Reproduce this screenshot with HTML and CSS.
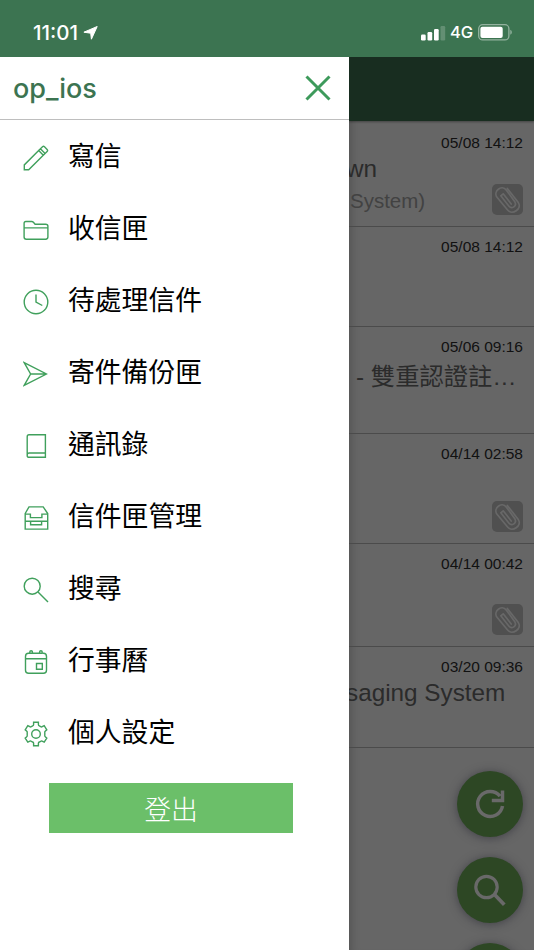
FILE: index.html
```html
<!DOCTYPE html>
<html lang="zh-Hant">
<head>
  <meta charset="UTF-8">
  <meta name="viewport" content="width=device-width, initial-scale=1.0">
  <title>op_ios</title>
  <link rel="stylesheet" href="styles.css">
</head>
<body>

  <header class="status-bar">
    <div class="status-left">
      <span class="clock">11:01</span>
      <svg class="location" width="15" height="14" viewBox="0 0 15 14"><path d="M14.2.5 8.4 13.2 7.7 7.2.9 6.2z" fill="#fff" stroke="#fff" stroke-width="1" stroke-linejoin="round"/></svg>
    </div>
    <div class="status-right">
      <svg width="25" height="16" viewBox="0 0 25 16" fill="#fff">
        <rect x="0" y="9.5" width="4.7" height="6" rx="1.2"/>
        <rect x="6.5" y="7" width="4.7" height="8.5" rx="1.2"/>
        <rect x="13" y="4" width="4.7" height="11.5" rx="1.2"/>
        <rect x="19.5" y="1" width="4.7" height="14.5" rx="1.2" opacity=".2"/>
      </svg>
      <span class="network">4G</span>
      <svg width="34" height="17" viewBox="0 0 34 17">
        <rect x=".7" y=".7" width="30.2" height="15.2" rx="4" fill="none" stroke="#fff" stroke-opacity=".45" stroke-width="1.3"/>
        <rect x="2.4" y="2.7" width="22.3" height="11.2" rx="2" fill="#fff"/>
        <path d="M32.3 5.8c2 .8 2 4.2 0 5z" fill="#fff" fill-opacity=".45"/>
      </svg>
    </div>
  </header>

  <div class="screen">
    <nav class="drawer">
      <div class="drawer-header">
        <span class="account">op_ios</span>
        <svg class="close" width="26" height="26" viewBox="0 0 26 26"><path d="M1.5 1.5l23 23M24.5 1.5l-23 23"/></svg>
      </div>

      <ul class="menu">
        <li>
          <svg class="icon" viewBox="0 0 26 26"><path d="M1.3 24.8v-4.9L15.7 5.5l4.6 4.7L5.7 24.8zM15.7 5.5 19.5 1.8q1-.9 2 0l2.6 2.6q1 1 0 2l-3.8 3.8M17.4 3.8l4.7 4.7"/></svg>
          <span>寫信</span>
        </li>
        <li>
          <svg class="icon" viewBox="0 0 26 26"><path d="M1.1 10.6V6.3q0-1.8 1.8-1.8h5.8q1 0 1.7.8l1.7 1.9h10.5q2.3 0 2.3 2.1v10.8q0 2.1-2.2 2.1H3.2q-2.1 0-2.1-2.1V10.9h23.8"/></svg>
          <span>收信匣</span>
        </li>
        <li>
          <svg class="icon" viewBox="0 0 26 26"><circle cx="13" cy="13" r="11.8"/><path d="M13 5.5V13l6.3 3.5"/></svg>
          <span>待處理信件</span>
        </li>
        <li>
          <svg class="icon" viewBox="0 0 26 26"><path d="M1.2 1.7 23.4 13 1.2 24.4 7.6 13zM7.6 13h15.8"/></svg>
          <span>寄件備份匣</span>
        </li>
        <li>
          <svg class="icon" viewBox="0 0 26 26"><path d="M6 1.8h16.4v22.5H6.2q-2 0-2-1.9V3.7Q4.2 1.8 6 1.8zM4.2 22q0-2 2-2h16.2"/></svg>
          <span>通訊錄</span>
        </li>
        <li>
          <svg class="icon" viewBox="0 0 26 26"><path d="M2.2 8.5 6 1.9h14.2l4.5 6.6v15.6H2.2zM2.2 9.1h5.2v3.5h11.5V9.1h5.8M2.2 16.2h22.5M7.6 16.2v3.6h11v-3.6"/></svg>
          <span>信件匣管理</span>
        </li>
        <li>
          <svg class="icon" viewBox="0 0 26 26"><circle cx="9.2" cy="9.2" r="8"/><path d="m15 15 10 10"/></svg>
          <span>搜尋</span>
        </li>
        <li>
          <svg class="icon" viewBox="0 0 26 26"><path d="M6 4.3H5.5Q2.5 4.3 2.5 7.4v13.8q0 3.1 3.1 3.1h14.8q3.1 0 3.1-3.1V7.4q0-3.1-3.1-3.1H20M6.8 4.3V3q0-1.3 1.3-1.3T9.4 3v1.3h7.2V3q0-1.3 1.3-1.3T19.2 3v1.3H6M2.5 9.8h21M13.5 14.5h5.8v5.7h-5.8z"/></svg>
          <span>行事曆</span>
        </li>
        <li>
          <svg class="icon" viewBox="0 0 26 26"><path d="M10.6 1.2h4.8v2.4q0 .9.9 1.3l1.4.8q.8.5 1.5 0l2-1.1 2.6 4.2-1.6 1.4q-.7.7-.4 1.6v2.5q-.3.9.5 1.5l1.5 1.3-2.6 4.1-2.1-1q-.8-.4-1.5.1l-1.3.7q-.9.4-.9 1.3v2.4h-4.8v-2.4q0-.9-.9-1.3l-1.3-.7q-.7-.5-1.5-.1l-2.1 1-2.6-4.1 1.5-1.3q.8-.6.5-1.5v-2.5q.3-.9-.4-1.6L2.2 8.8l2.6-4.2 2 1.1q.7.5 1.5 0l1.4-.8q.9-.4.9-1.3z"/><circle cx="13" cy="13" r="4.3"/></svg>
          <span>個人設定</span>
        </li>
      </ul>

      <button class="logout">登出</button>
    </nav>

    <main class="inbox">
      <div class="toolbar"></div>

      <article class="mail mail-1">
        <time>05/08 14:12</time>
        <h3 class="clipped">wn</h3>
        <p>System)</p>
        <svg class="attachment" viewBox="0 0 31 31"><rect width="31" height="31" rx="5"/><path d="M15.3 4.4 26.3 18.6C30.4 24.8 20.2 31.6 15.6 26L5 13.2C.8 7.4 9.6.2 14.4 6.2L22.8 17.8C25.3 22 19.8 25.6 17 22.2L8.8 11.8 11.2 9.8 19.2 20"/></svg>
      </article>
      <article class="mail mail-2">
        <time>05/08 14:12</time>
      </article>
      <article class="mail mail-3">
        <time>05/06 09:16</time>
        <h3 class="chinese">- 雙重認證註…</h3>
      </article>
      <article class="mail mail-4">
        <time>04/14 02:58</time>
        <svg class="attachment" viewBox="0 0 31 31"><rect width="31" height="31" rx="5"/><path d="M15.3 4.4 26.3 18.6C30.4 24.8 20.2 31.6 15.6 26L5 13.2C.8 7.4 9.6.2 14.4 6.2L22.8 17.8C25.3 22 19.8 25.6 17 22.2L8.8 11.8 11.2 9.8 19.2 20"/></svg>
      </article>
      <article class="mail mail-5">
        <time>04/14 00:42</time>
        <svg class="attachment" viewBox="0 0 31 31"><rect width="31" height="31" rx="5"/><path d="M15.3 4.4 26.3 18.6C30.4 24.8 20.2 31.6 15.6 26L5 13.2C.8 7.4 9.6.2 14.4 6.2L22.8 17.8C25.3 22 19.8 25.6 17 22.2L8.8 11.8 11.2 9.8 19.2 20"/></svg>
      </article>
      <article class="mail mail-6">
        <time>03/20 09:36</time>
        <h3 class="clipped">saging System</h3>
      </article>

      <div class="fabs">
        <button class="fab"><svg viewBox="0 0 66 66"><path d="M45.5 35A12.5 12.5 0 1 1 43 25.2M45.5 19.5v10H34.8" stroke-width="3.5"/></svg></button>
        <button class="fab"><svg viewBox="0 0 66 66"><circle cx="29.5" cy="30" r="10.7" stroke-width="3.2"/><path d="M37.5 37.5 47.3 47.8" stroke-width="3.7"/></svg></button>
        <button class="fab"></button>
      </div>
    </main>
  </div>

</body>
</html>
```
FILE: styles.css
```css
* {
  box-sizing: border-box;
}

body {
  margin: 0;
  height: 950px;
  overflow: hidden;
  font-family: "Liberation Sans", "Noto Sans CJK TC", sans-serif;
  background-color: #fff;
}

.status-bar {
  display: flex;
  justify-content: space-between;
  height: 57px;
  padding: 22px 22px 0 33px;
  background-color: #3c7451;
  color: #fff;
  font-family: Inter, sans-serif;
}

.status-left,
.status-right {
  display: flex;
  align-items: center;
  height: 21px;
}

.clock {
  font-size: 20.5px;
  font-weight: 500;
}

.location {
  margin-left: 5px;
}

.network {
  width: 23px;
  margin: 0 5px 2px 4px;
  font-size: 16.5px;
  font-weight: 500;
}

.screen {
  display: flex;
  height: 893px;
}

.drawer {
  width: 349px;
  background-color: #fff;
}

.drawer-header {
  display: flex;
  align-items: center;
  justify-content: space-between;
  height: 63px;
  padding: 0 18px 0 13px;
  border-bottom: 1px solid #bebebe;
}

.account {
  color: #3c7451;
  font-family: Inter, sans-serif;
  font-size: 27px;
  font-weight: 500;
}

.close {
  fill: none;
  stroke: #3d9a5b;
  stroke-width: 3;
}

.menu {
  margin: 0;
  padding: 0;
  list-style: none;
}

.menu li {
  display: flex;
  align-items: center;
  height: 72px;
  padding-left: 23px;
  color: #000;
  font-family: "Noto Sans CJK TC", sans-serif;
  font-size: 26.8px;
  line-height: 40px;
}

.menu span {
  padding-bottom: 3px;
}

.icon {
  width: 26px;
  height: 26px;
  margin: 3px 19px 0 0;
  fill: none;
  stroke: #40a05c;
  stroke-width: 1.4;
}

.logout {
  display: block;
  width: 244px;
  height: 50px;
  margin: 15px 0 0 49px;
  padding: 0;
  border: 0;
  background-color: #6bbf69;
  color: #fff;
  font-family: "Noto Sans CJK TC", sans-serif;
  font-size: 26.8px;
  font-weight: 300;
}

.inbox {
  position: relative;
  flex: 1;
  overflow: hidden;
  background-color: #666;
  box-shadow: inset 10px 0 10px -8px rgba(0, 0, 0, 0.2);
}

.toolbar {
  height: 64px;
  background-color: #182d20;
  box-shadow: 0 1px 2px rgba(0, 0, 0, 0.35);
}

.mail {
  position: relative;
  padding-top: 11px;
  border-bottom: 1px solid #4b4b4b;
}

.mail-1 {
  height: 106px;
  padding-top: 13px;
}

.mail-2 {
  height: 100px;
}

.mail-3 {
  height: 107px;
}

.mail-4 {
  height: 110px;
}

.mail-5 {
  height: 103px;
}

.mail-6 {
  height: 101px;
}

.mail time {
  display: block;
  padding-right: 11px;
  color: #111;
  font-size: 15.5px;
  line-height: 18px;
  text-align: right;
}

.mail h3 {
  margin: 0;
  color: #2b2b2b;
  font-size: 24.3px;
  font-weight: normal;
  line-height: 34px;
  white-space: nowrap;
}

.mail h3.clipped {
  margin-left: -3px;
}

.mail h3.chinese {
  padding-left: 7px;
  line-height: 42px;
}

.mail p {
  margin: 0;
  padding-left: 1px;
  color: #424242;
  font-size: 20.5px;
  line-height: 30px;
}

.attachment {
  position: absolute;
  right: 11px;
  bottom: 11px;
  width: 31px;
  height: 31px;
}

.attachment rect {
  fill: #505050;
}

.attachment path {
  fill: none;
  stroke: #686868;
  stroke-width: 1.7;
  stroke-linecap: round;
  stroke-linejoin: round;
}

.fabs {
  position: absolute;
  top: 714px;
  right: 11px;
  display: flex;
  flex-direction: column;
  gap: 20px;
}

.fab {
  width: 66px;
  height: 66px;
  padding: 0;
  border: 0;
  border-radius: 50%;
  background-color: #2d4724;
  box-shadow: 0 1px 10px rgba(40, 40, 50, 0.6);
}

.fab svg {
  display: block;
  fill: none;
  stroke: #696969;
}
```
